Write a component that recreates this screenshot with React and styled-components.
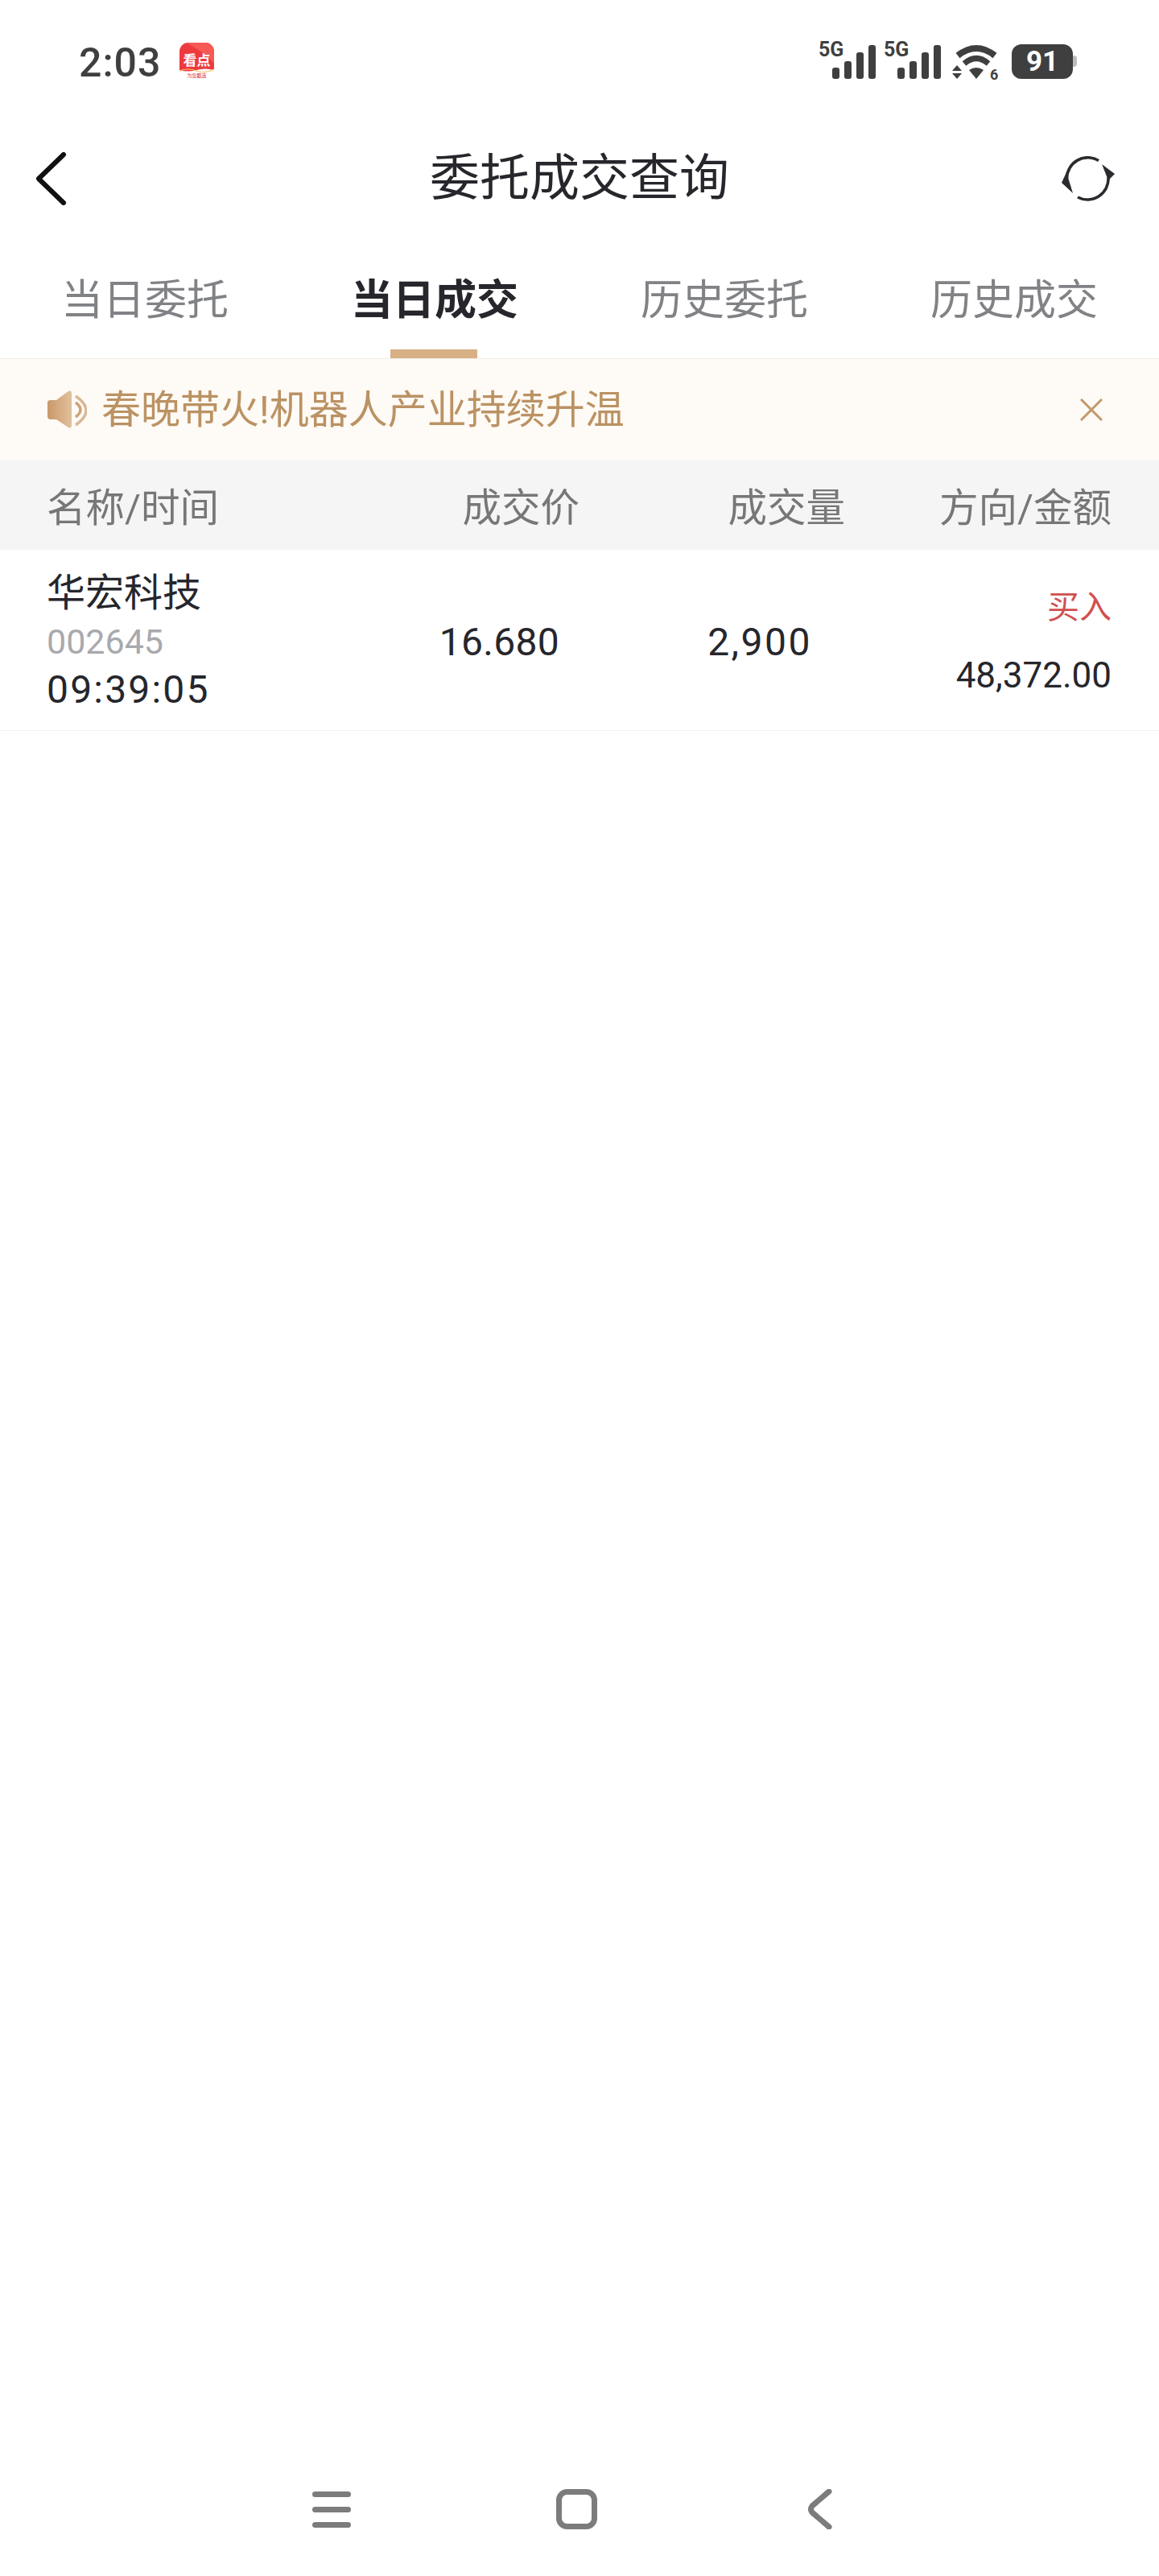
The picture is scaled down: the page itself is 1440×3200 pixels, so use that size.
import React from 'react'
import styled, { createGlobalStyle } from 'styled-components'

const FONT = '"Roboto", "Noto Sans CJK SC", sans-serif'

const GlobalStyle = createGlobalStyle`
  html, body {
    margin: 0;
    padding: 0;
    background: #fff;
  }
  body {
    font-family: ${FONT};
  }
`

const Page = styled.div`
  width: 1440px;
  height: 3200px;
  display: flex;
  flex-direction: column;
  background: #fff;
  overflow: hidden;
`

const StatusBar = styled.div`
  height: 150px;
  padding: 43px 102px 0 98px;
  display: flex;
  align-items: flex-start;
  justify-content: space-between;
  box-sizing: border-box;
`

const StatusLeft = styled.div`
  margin-top: 10px;
  display: flex;
  align-items: flex-start;
  gap: 23px;
`

const Clock = styled.span`
  font-size: 50px;
  line-height: 50px;
  font-weight: 500;
  letter-spacing: 1px;
  color: #3f3f3f;
`

const StatusRight = styled.div`
  display: flex;
  align-items: flex-start;
  gap: 10px;
`

const NavBar = styled.div`
  height: 140px;
  padding: 4px 43px 0;
  display: grid;
  grid-template-columns: 1fr auto 1fr;
  align-items: center;
  box-sizing: border-box;
`

const NavRight = styled.div`
  display: flex;
  justify-content: flex-end;
  padding-right: 12px;
`

const Title = styled.h1`
  margin: 0;
  font-size: 62px;
  line-height: 80px;
  font-weight: 400;
  color: #26262c;
`

const Tabs = styled.div`
  height: 155px;
  display: grid;
  grid-template-columns: repeat(4, 1fr);
  border-bottom: 1px solid #f0ece8;
`

const Tab = styled.div`
  position: relative;
  display: flex;
  align-items: flex-start;
  justify-content: center;
  padding-top: 49px;
  font-size: 52px;
  line-height: 70px;
  font-weight: ${(p) => (p.$active ? 700 : 400)};
  color: ${(p) => (p.$active ? '#26262c' : '#808285')};

  ${(p) => p.$active && `
    &::after {
      content: '';
      position: absolute;
      left: 125px;
      bottom: 0;
      width: 108px;
      height: 11px;
      background: #d8b086;
    }
  `}
`

const Notice = styled.div`
  height: 126px;
  padding: 0 70px 0 58px;
  display: flex;
  align-items: center;
  background: #fefaf5;
  font-size: 49px;
  color: #bb9263;
`

const NoticeText = styled.span`
  flex: 1;
  margin-left: 18px;
  padding-top: 2px;
  line-height: 60px;
`

const TableHead = styled.div`
  height: 111px;
  padding: 0 59px 2px 58px;
  display: grid;
  grid-template-columns: 1fr 262px 330px 331px;
  align-items: center;
  background: #f5f5f5;
  font-size: 48.5px;
  color: #777;
  box-sizing: border-box;
`

const HeadCell = styled.span`
  text-align: ${(p) => (p.$left ? 'left' : 'right')};
`

const Row = styled.div`
  height: 225px;
  padding: 4px 59px 0 58px;
  display: grid;
  grid-template-columns: 1fr 262px 330px 331px;
  align-items: center;
  border-bottom: 1px solid #f1f1f1;
  color: #26262c;
  box-sizing: border-box;
`

const NameCell = styled.div`
  display: flex;
  flex-direction: column;
`

const StockName = styled.span`
  font-size: 48px;
  line-height: 60px;
`

const StockCode = styled.span`
  font-size: 43px;
  line-height: 60px;
  color: #a8a9ad;
`

const TradeTime = styled.span`
  font-size: 48px;
  line-height: 60px;
  letter-spacing: 2.2px;
`

const NumCell = styled.span`
  font-size: 48px;
  text-align: right;
  letter-spacing: ${(p) => p.$spacing}px;
  padding-right: ${(p) => p.$inset}px;
`

const AmountCell = styled.div`
  display: flex;
  flex-direction: column;
  align-items: flex-end;
  gap: 34px;
`

const Direction = styled.span`
  font-size: 40px;
  line-height: 50px;
  color: #d05050;
`

const Amount = styled.span`
  font-size: 44px;
  line-height: 50px;
`

const Spacer = styled.div`
  flex: 1;
`

const BottomNav = styled.div`
  height: 108px;
  padding: 0 406px 58px 388px;
  display: flex;
  align-items: center;
  justify-content: space-between;
  box-sizing: border-box;
`

const HomeSlot = styled.div`
  display: flex;
  margin-right: 6px;
`

const Battery = styled.div`
  position: relative;
  width: 76px;
  height: 43px;
  margin: 12px 5px 0 0;
  border-radius: 12px;
  background: #3f3f3f;
  display: flex;
  align-items: center;
  justify-content: center;
  font-size: 35px;
  font-weight: 700;
  color: #fff;

  &::after {
    content: '';
    position: absolute;
    right: -5px;
    top: 14px;
    width: 5px;
    height: 14px;
    border-radius: 0 4px 4px 0;
    background: #bdbdbd;
  }
`

function AppBadge () {
  return (
    <svg width="43" height="46" viewBox="0 0 43 46">
      <defs>
        <clipPath id="badge"><rect width="43" height="46" rx="11" /></clipPath>
      </defs>
      <g clipPath="url(#badge)">
        <rect width="43" height="46" fill="#fff" />
        <path d="M0 0H43V34Q32 31 21 34T0 34Z" fill="#ee3a3f" />
        <path d="M8 0Q28 10 43 26V0Z" fill="#f65a55" />
        <path d="M0 35Q11 31 21 35T43 33" stroke="#f7c26a" strokeWidth="1.2" fill="none" />
        <text x="21.5" y="28" textAnchor="middle" fontSize="17" fontWeight="700" fill="#fff" fontFamily={FONT}>看点</text>
        <text x="21.5" y="43" textAnchor="middle" fontSize="6" fill="#d8322f" fontFamily={FONT}>为您甄选</text>
      </g>
    </svg>
  )
}

function Signal () {
  return (
    <svg width="71" height="56" viewBox="0 -10 71 56">
      <text x="0" y="17" fontSize="25" fontWeight="700" fill="#3f3f3f" fontFamily={FONT}>5G</text>
      <rect x="17" y="31" width="9" height="14" rx="3" fill="#3f3f3f" />
      <rect x="32" y="23" width="9" height="22" rx="3" fill="#3f3f3f" />
      <rect x="47" y="12" width="9" height="33" rx="3" fill="#3f3f3f" />
      <rect x="62" y="3" width="9" height="42" rx="3" fill="#3f3f3f" />
    </svg>
  )
}

function Wifi () {
  return (
    <svg width="68" height="66" viewBox="9 3 68 66">
      <path d="M20 29Q43 11 66 29" stroke="#3f3f3f" strokeWidth="8" fill="none" />
      <path d="M28 39Q43 26 58 39" stroke="#3f3f3f" strokeWidth="7" fill="none" />
      <path d="M34 47Q43 41 52 47L43 58Z" fill="#3f3f3f" />
      <path d="M13 48L19 41L25 48ZM13 51H25L19 58Z" fill="#3f3f3f" />
      <text x="60" y="59" fontSize="18" fontWeight="700" fill="#3f3f3f" fontFamily={FONT}>6</text>
    </svg>
  )
}

function BackIcon () {
  return (
    <svg width="40" height="66" viewBox="0 0 40 66">
      <path d="M36 3L5 33L36 63" stroke="#111" strokeWidth="6" strokeLinecap="round" strokeLinejoin="round" fill="none" />
    </svg>
  )
}

function RefreshIcon () {
  return (
    <svg width="67" height="56" viewBox="18 22 67 56">
      <path d="M25.5 50A26 26 0 0 1 65 27.5" stroke="#2b2b2f" strokeWidth="3.6" fill="none" />
      <path d="M77 48A26 26 0 0 1 39 73" stroke="#2b2b2f" strokeWidth="3.6" fill="none" />
      <path d="M69 32L85 44L77 52Z" fill="#2b2b2f" />
      <path d="M19 55L33 68L25 42Z" fill="#2b2b2f" />
    </svg>
  )
}

function SpeakerIcon () {
  return (
    <svg width="50" height="50" viewBox="14 14 50 50">
      <defs>
        <linearGradient id="spk" x1="0" x2="1" y1="0" y2="0">
          <stop offset="0" stopColor="#c9986a" />
          <stop offset="1" stopColor="#e2c09c" />
        </linearGradient>
      </defs>
      <path d="M15 30Q15 27 19 27H26L41 16Q45 14 45 19V58Q45 63 41 61L26 51H19Q15 51 15 47Z" fill="url(#spk)" />
      <path d="M50 30Q62 39 50 48" stroke="#cba47c" strokeWidth="3.5" fill="none" />
      <path d="M50 22Q76 40 50 58" stroke="#d8b896" strokeWidth="3.5" fill="none" />
    </svg>
  )
}

function CloseIcon () {
  return (
    <svg width="28" height="28" viewBox="0 0 28 28">
      <path d="M1 1L27 27M27 1L1 27" stroke="#c29a6c" strokeWidth="3" fill="none" />
    </svg>
  )
}

function MenuIcon () {
  return (
    <svg width="48" height="45" viewBox="0 0 48 45">
      <rect y="0" width="48" height="7" rx="3.5" fill="#7c7c7c" />
      <rect y="19" width="48" height="7" rx="3.5" fill="#7c7c7c" />
      <rect y="38" width="48" height="7" rx="3.5" fill="#7c7c7c" />
    </svg>
  )
}

function HomeIcon () {
  return (
    <svg width="51" height="50" viewBox="0 0 51 50">
      <rect x="3.5" y="3.5" width="44" height="43" rx="10" stroke="#7c7c7c" strokeWidth="7" fill="none" />
    </svg>
  )
}

function NavBackIcon () {
  return (
    <svg width="31" height="50" viewBox="0 0 31 50">
      <path d="M27 3L6 21Q3 25 6 29L27 47" stroke="#7c7c7c" strokeWidth="7" strokeLinecap="round" strokeLinejoin="round" fill="none" />
    </svg>
  )
}

const tabs = ['当日委托', '当日成交', '历史委托', '历史成交']

export default function App () {
  return (
    <Page>
      <GlobalStyle />
      <StatusBar>
        <StatusLeft>
          <Clock>2:03</Clock>
          <AppBadge />
        </StatusLeft>
        <StatusRight>
          <Signal />
          <Signal />
          <Wifi />
          <Battery>91</Battery>
        </StatusRight>
      </StatusBar>
      <NavBar>
        <BackIcon />
        <Title>委托成交查询</Title>
        <NavRight>
          <RefreshIcon />
        </NavRight>
      </NavBar>
      <Tabs>
        {tabs.map((t, i) => <Tab key={t} $active={i === 1}>{t}</Tab>)}
      </Tabs>
      <Notice>
        <SpeakerIcon />
        <NoticeText>春晚带火!机器人产业持续升温</NoticeText>
        <CloseIcon />
      </Notice>
      <TableHead>
        <HeadCell $left>名称/时间</HeadCell>
        <HeadCell>成交价</HeadCell>
        <HeadCell>成交量</HeadCell>
        <HeadCell>方向/金额</HeadCell>
      </TableHead>
      <Row>
        <NameCell>
          <StockName>华宏科技</StockName>
          <StockCode>002645</StockCode>
          <TradeTime>09:39:05</TradeTime>
        </NameCell>
        <NumCell $inset={25} $spacing={0.3}>16.680</NumCell>
        <NumCell $inset={41} $spacing={2.5}>2,900</NumCell>
        <AmountCell>
          <Direction>买入</Direction>
          <Amount>48,372.00</Amount>
        </AmountCell>
      </Row>
      <Spacer />
      <BottomNav>
        <MenuIcon />
        <HomeSlot>
          <HomeIcon />
        </HomeSlot>
        <NavBackIcon />
      </BottomNav>
    </Page>
  )
}
